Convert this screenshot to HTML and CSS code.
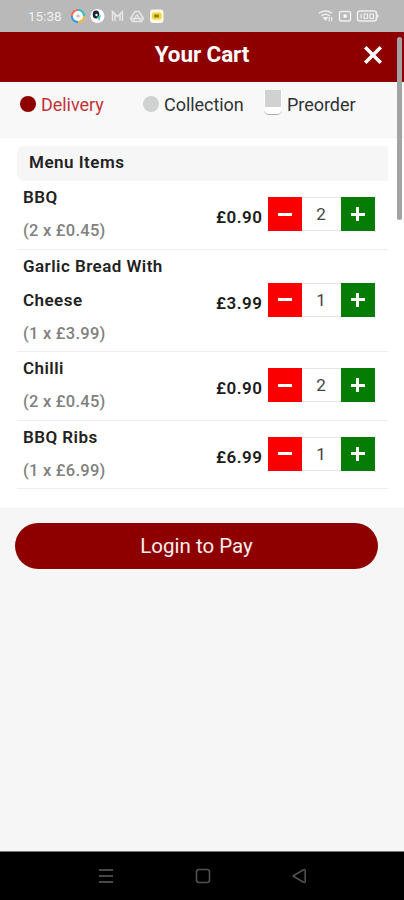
FILE: index.html
```html
<!DOCTYPE html>
<html lang="en">
<head>
<meta charset="utf-8">
<title>Your Cart</title>
<link rel="stylesheet" href="styles.css">
</head>
<body>
<div class="screen">
  <div class="status">
    <span class="time">15:38</span>
    <svg class="apps" width="96" height="18" viewBox="0 0 96 18">
      <circle cx="8" cy="9" r="7.2" fill="#fff"/>
      <g fill="none" stroke-width="2.2">
        <path d="M1.8 9A6.2 6.2 0 0 1 8 2.8" stroke="#e8755a"/>
        <path d="M8 2.8A6.2 6.2 0 0 1 14.2 9" stroke="#39b9c4"/>
        <path d="M14.2 9A6.2 6.2 0 0 1 8 15.2" stroke="#f2b04a"/>
        <path d="M8 15.2A6.2 6.2 0 0 1 1.8 9" stroke="#3b9ae0"/>
      </g>
      <circle cx="8" cy="9" r="1.8" fill="#c8c4c4"/>
      <circle cx="27.500" cy="9" r="7" fill="#fff"/>
      <ellipse cx="26" cy="7.500" rx="3.300" ry="4" fill="#1c2430"/>
      <circle cx="26.500" cy="8" r="1.200" fill="#fff"/>
      <path d="M27 10l4-2-1.500 6z" fill="#49cdb5"/>
      <path d="M42.500 14V4.500L47.500 9.500L52.500 4.500V14M45 14V7M50 14V7" fill="none" stroke="#e6e6e6" stroke-width="1.500"/>
      <path d="M65 4.500h4l4.500 7-2 3h-9l-2-3zM67 7.500l-3.500 6M67 7.500l3.500 6M62 11.500h10" fill="none" stroke="#e6e6e6" stroke-width="1.400" stroke-linejoin="round"/>
      <rect x="80" y="2.500" width="13.500" height="13.500" rx="3" fill="#fff8e4"/>
      <rect x="82" y="5.500" width="9.500" height="7" rx="2" fill="#f0d62f"/>
      <rect x="84" y="7.500" width="5" height="3" rx="1" fill="#8d8020"/>
    </svg>
    <svg class="signals" width="64" height="18" viewBox="0 0 64 18" fill="none" stroke="#eee" stroke-width="1.500">
      <path d="M2 6.200q6.500-4.400 13 0M4.300 8.800q4.200-3 8.400 0"/>
      <path d="M5.500 10h6L8.500 14z" fill="#eee" stroke="none"/>
      <path d="M12.200 10v4.500M14.700 10v4.500" stroke-width="1.200"/>
      <rect x="22.500" y="4.500" width="11" height="9.500" rx="1.500"/>
      <rect x="26.500" y="7.500" width="3.200" height="3.200" fill="#fff" stroke="none"/>
      <rect x="40.500" y="4" width="19" height="10" rx="2.500"/>
      <path d="M60.500 7.500v3"/>
      <path d="M44 7v4.500M47 7h3.500v4.500H47zM53 7h3.500v4.500H53z" stroke-width="1.200"/>
    </svg>
  </div>
  <header class="header">
    <h1>Your Cart</h1>
    <svg class="close" width="20" height="20" viewBox="0 0 20 20"><path d="M2.200 2.200L17.800 17.800M17.800 2.200L2.200 17.800" stroke="#fff" stroke-width="3.500"/></svg>
  </header>
  <nav class="modes">
    <div class="mode active"><span class="dot"></span><span class="label delivery">Delivery</span></div>
    <div class="mode"><span class="dot"></span><span class="label collection">Collection</span></div>
    <div class="mode"><span class="switch"><i></i></span><span class="label preorder">Preorder</span></div>
  </nav>
  <main class="cart">
    <h2>Menu Items</h2>
    <ul>
      <li class="item">
        <div class="name"><b>BBQ</b><span>(2 x £0.45)</span></div>
        <span class="price">£0.90</span>
        <div class="qty"><span class="minus"></span><span class="count">2</span><span class="plus"></span></div>
      </li>
      <li class="item">
        <div class="name"><b>Garlic Bread With<br>Cheese</b><span>(1 x £3.99)</span></div>
        <span class="price">£3.99</span>
        <div class="qty"><span class="minus"></span><span class="count">1</span><span class="plus"></span></div>
      </li>
      <li class="item">
        <div class="name"><b>Chilli</b><span>(2 x £0.45)</span></div>
        <span class="price">£0.90</span>
        <div class="qty"><span class="minus"></span><span class="count">2</span><span class="plus"></span></div>
      </li>
      <li class="item">
        <div class="name"><b>BBQ Ribs</b><span>(1 x £6.99)</span></div>
        <span class="price">£6.99</span>
        <div class="qty"><span class="minus"></span><span class="count">1</span><span class="plus"></span></div>
      </li>
    </ul>
  </main>
  <section class="pay"><div class="login">Login to Pay</div></section>
  <footer class="navbar">
    <svg width="16" height="16" viewBox="0 0 16 16" stroke="#484848" stroke-width="2"><path d="M1 2h14M1 8h14M1 14h14"/></svg>
    <svg width="16" height="16" viewBox="0 0 16 16" fill="none" stroke="#505050" stroke-width="1.600"><rect x="1.500" y="1.500" width="13" height="13" rx="2.500"/></svg>
    <svg width="16" height="16" viewBox="0 0 16 16" fill="none" stroke="#505050" stroke-width="1.600" stroke-linejoin="round"><path d="M2 8L12.500 1.700Q14.200 1.200 14.200 3V13Q14.200 14.800 12.500 14.300Z"/></svg>
  </footer>
  <div class="scrollbar"></div>
</div>
</body>
</html>
```
FILE: styles.css
```css
* { box-sizing: border-box; }
body { margin: 0; font-family: Roboto, sans-serif; color: #222; }
h1, h2, ul { margin: 0; padding: 0; }
svg { display: block; flex: none; }
.screen { position: relative; width: 404px; height: 900px; display: flex; flex-direction: column; background: #f6f6f6; overflow: hidden; }
.status { height: 32px; flex: none; background: #b9b9b9; display: flex; align-items: center; padding: 0 23px 0 28px; }
.time { width: 42px; font-size: 13.5px; color: #f0f0f0; }
.signals { margin-left: auto; }
.header { height: 50px; flex: none; background: #8e0000; display: grid; grid-template-columns: 1fr auto 1fr; align-items: center; padding: 0 21px; }
.header h1 { grid-column: 2; font-size: 22.5px; line-height: 26px; font-weight: 700; letter-spacing: -.1px; color: #fff; padding-bottom: 7px; }
.close { justify-self: end; position: relative; top: -2px; }
.modes { height: 56px; flex: none; background: #f8f8f8; border-bottom: 1px solid #f3f3f3; display: grid; grid-template-columns: 123px 122px 1fr; padding: 10px 0 0 19.5px; }
.mode { display: flex; align-items: center; height: 24px; color: #303236; }
.dot { width: 16px; height: 16px; border-radius: 50%; background: #d0d2d1; margin-right: 5.5px; flex: none; }
.active .dot { background: #8e0000; }
.label { font-size: 18px; letter-spacing: -.05px; }
.delivery { color: #c23338; }
.switch { width: 18px; height: 25px; margin: -4px 5px 0 -.5px; border-bottom: 1.500px solid #aaa; border-radius: 0 0 5px 5px; display: flex; justify-content: center; background: #fff; flex: none; }
.switch i { width: 16px; height: 17px; background: #cfd2d0; }
.cart { height: 371px; flex: none; background: #fff; border-bottom: 1px solid #efefef; padding: 8px 16px 0 17px; }
.cart h2 { height: 35px; line-height: 33px; border-radius: 7px 0 0 7px; background: #f6f6f6; padding-left: 12px; font-size: 17px; font-weight: 600; letter-spacing: .5px; }
.cart ul { list-style: none; }
.item { display: flex; align-items: center; border-bottom: 1px solid #eee; padding: 0 13.5px 0 6px; }
.name { display: flex; flex-direction: column; flex: 1; }
.name b { font-size: 17px; line-height: 34px; margin: -1px 0 1px; font-weight: 600; letter-spacing: .45px; }
.name span { font-size: 16.5px; line-height: 32px; height: 33.500px; font-weight: 500; letter-spacing: .25px; color: #808080; }
.price { font-size: 17px; font-weight: 600; letter-spacing: .5px; color: #1b1b1b; margin: 5px 5px 0 0; }
.qty { display: flex; width: 107px; height: 34px; margin-top: -1px; }
.minus, .plus { width: 34px; display: grid; place-items: center; }
.minus { background: #fb0000; }
.plus { background: #057d05; }
.minus::before, .plus::before, .plus::after { content: ""; grid-area: 1 / 1; width: 14px; height: 3px; background: #fff; }
.plus::after { width: 3px; height: 14px; }
.count { flex: 1; border-top: 1px solid #e4e4e4; border-bottom: 1px solid #e4e4e4; text-align: center; line-height: 32px; font-size: 17px; color: #444; }
.pay { flex: 1; padding: 14px 26px 0 15px; }
.login { height: 46px; border-radius: 23px; background: #8e0000; color: #f9eeee; display: grid; place-items: center; font-size: 20.5px; }
.navbar { height: 49px; flex: none; background: #000; border-top: 1px solid #777; display: flex; justify-content: space-between; align-items: center; padding: 0 97px 0 98px; }
.scrollbar { position: absolute; left: 397px; top: 37px; width: 5px; height: 183px; border-radius: 3px; background: #a3a3a3; }
```
